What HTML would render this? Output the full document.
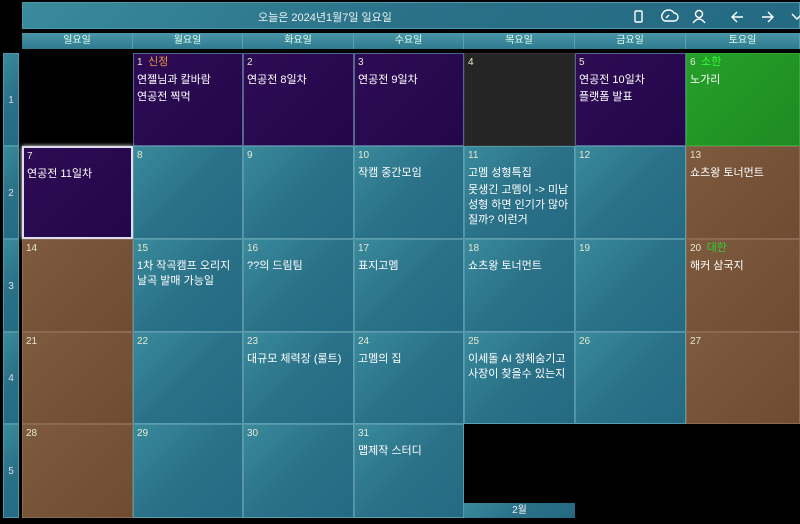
<!DOCTYPE html>
<html><head><meta charset="utf-8"><style>
*{margin:0;padding:0;box-sizing:border-box}
body{width:800px;height:524px;background:#000;position:relative;overflow:hidden;font-family:"Liberation Sans","Noto Sans CJK KR",sans-serif;color:#fff}
.a{position:absolute}
.teal{background:linear-gradient(135deg,#3a8a9c 0%,#2a7188 50%,#236a82 100%)}
.title{left:22px;top:2px;width:778px;height:27px;border:1px solid #4d98a8;font-size:11px}
.hd{top:33px;height:16px;font-size:10px;text-align:center;line-height:15px;color:#dfe;border-right:1px solid #5aa0b0;background:linear-gradient(#4a95a8,#2e7a8e)}
.wk{left:3px;width:16px;font-size:10px;text-align:center;color:#dde;border:1px solid #4d98a8}
.c{border:1px solid rgba(120,180,195,.55);padding:2px 3px;font-size:11px;line-height:17px;word-break:break-all}
.n{font-size:10px;color:#e6e8d0;line-height:13px;margin-bottom:4px}
.p{background:linear-gradient(135deg,#2e0c55,#23064a)}
.br{background:linear-gradient(135deg,#7e5a3e,#6e4c32);border-color:#8a6a50}
.g{background:linear-gradient(135deg,#26a02a,#1f8a22);border-color:#3a3}
.dk{background:#252525;border-color:#333}
.ev{font-size:11px;line-height:15px;margin-bottom:2px}
</style></head><body>
<div class="a title teal">
<div class="a" style="left:235px;top:6px;color:#e8f0f0">오늘은 2024년1월7일 일요일</div>
<svg class="a" style="left:608px;top:5px" width="170" height="18" viewBox="0 0 170 18" fill="none" stroke="#fff" stroke-width="1.4">
<rect x="4" y="3" width="7" height="11" rx="1"/>
<path d="M34 13 a5 5 0 0 1 -2 -8 a6 5 0 0 1 11 0 a4 4 0 0 1 0 8 z M35 10 l3 -3"/>
<circle cx="68" cy="6" r="3.5"/><path d="M62 15 q6 -8 12 0"/>
<path d="M112 9 h-11 M106 4 l-5 5 5 5"/>
<path d="M131 9 h11 M137 4 l5 5 -5 5"/>
<path d="M164 6 l5 5 5 -5" transform="translate(-3,0)"/>
</svg>
</div>
<div class="a hd" style="left:22px;width:111px">일요일</div>
<div class="a hd" style="left:133px;width:110px">월요일</div>
<div class="a hd" style="left:243px;width:111px">화요일</div>
<div class="a hd" style="left:354px;width:110px">수요일</div>
<div class="a hd" style="left:464px;width:111px">목요일</div>
<div class="a hd" style="left:575px;width:111px">금요일</div>
<div class="a hd" style="left:686px;width:114px">토요일</div>

<div class="a wk teal" style="top:53px;height:93px;line-height:93px">1</div>
<div class="a wk teal" style="top:146px;height:93px;line-height:93px">2</div>
<div class="a wk teal" style="top:239px;height:93px;line-height:93px">3</div>
<div class="a wk teal" style="top:332px;height:92px;line-height:92px">4</div>
<div class="a wk teal" style="top:424px;height:94px;line-height:94px">5</div>

<!-- row1 -->
<div class="a c p" style="left:133px;top:53px;width:110px;height:93px"><div class="n">1 &nbsp;<span style="color:#e89a40;font-size:11px">신정</span></div><div class="ev">연젤님과 칼바람</div><div class="ev">연공전 찍먹</div></div>
<div class="a c p" style="left:243px;top:53px;width:111px;height:93px"><div class="n">2</div><div class="ev">연공전 8일차</div></div>
<div class="a c p" style="left:354px;top:53px;width:110px;height:93px"><div class="n">3</div><div class="ev">연공전 9일차</div></div>
<div class="a c dk" style="left:464px;top:53px;width:111px;height:93px"><div class="n">4</div></div>
<div class="a c p" style="left:575px;top:53px;width:111px;height:93px"><div class="n">5</div><div class="ev">연공전 10일차</div><div class="ev">플랫폼 발표</div></div>
<div class="a c g" style="left:686px;top:53px;width:114px;height:93px"><div class="n">6 &nbsp;<span style="color:#3f3;font-size:11px">소한</span></div><div class="ev">노가리</div></div>
<!-- row2 -->
<div class="a c p" style="left:22px;top:146px;width:111px;height:93px;border:2px solid #dde;box-shadow:0 0 4px #fff"><div class="n">7</div><div class="ev">연공전 11일차</div></div>
<div class="a c teal" style="left:133px;top:146px;width:110px;height:93px"><div class="n">8</div></div>
<div class="a c teal" style="left:243px;top:146px;width:111px;height:93px"><div class="n">9</div></div>
<div class="a c teal" style="left:354px;top:146px;width:110px;height:93px"><div class="n">10</div><div class="ev">작캠 중간모임</div></div>
<div class="a c teal" style="left:464px;top:146px;width:111px;height:93px"><div class="n">11</div><div class="ev">고멤 성형특집</div><div class="ev">못생긴 고멤이 -&gt; 미남성형 하면 인기가 많아질까? 이런거</div></div>
<div class="a c teal" style="left:575px;top:146px;width:111px;height:93px"><div class="n">12</div></div>
<div class="a c br" style="left:686px;top:146px;width:114px;height:93px"><div class="n">13</div><div class="ev">쇼츠왕 토너먼트</div></div>
<!-- row3 -->
<div class="a c br" style="left:22px;top:239px;width:111px;height:93px"><div class="n">14</div></div>
<div class="a c teal" style="left:133px;top:239px;width:110px;height:93px"><div class="n">15</div><div class="ev">1차 작곡캠프 오리지날곡 발매 가능일</div></div>
<div class="a c teal" style="left:243px;top:239px;width:111px;height:93px"><div class="n">16</div><div class="ev">??의 드림팀</div></div>
<div class="a c teal" style="left:354px;top:239px;width:110px;height:93px"><div class="n">17</div><div class="ev">표지고멤</div></div>
<div class="a c teal" style="left:464px;top:239px;width:111px;height:93px"><div class="n">18</div><div class="ev">쇼츠왕 토너먼트</div></div>
<div class="a c teal" style="left:575px;top:239px;width:111px;height:93px"><div class="n">19</div></div>
<div class="a c br" style="left:686px;top:239px;width:114px;height:93px"><div class="n">20 &nbsp;<span style="color:#3c3;font-size:11px">대한</span></div><div class="ev">해커 삼국지</div></div>
<!-- row4 -->
<div class="a c br" style="left:22px;top:332px;width:111px;height:92px"><div class="n">21</div></div>
<div class="a c teal" style="left:133px;top:332px;width:110px;height:92px"><div class="n">22</div></div>
<div class="a c teal" style="left:243px;top:332px;width:111px;height:92px"><div class="n">23</div><div class="ev">대규모 체력장 (룰트)</div></div>
<div class="a c teal" style="left:354px;top:332px;width:110px;height:92px"><div class="n">24</div><div class="ev">고멤의 집</div></div>
<div class="a c teal" style="left:464px;top:332px;width:111px;height:92px"><div class="n">25</div><div class="ev">이세돌 AI 정체숨기고 사장이 찾을수 있는지</div></div>
<div class="a c teal" style="left:575px;top:332px;width:111px;height:92px"><div class="n">26</div></div>
<div class="a c br" style="left:686px;top:332px;width:114px;height:92px"><div class="n">27</div></div>
<!-- row5 -->
<div class="a c br" style="left:22px;top:424px;width:111px;height:94px"><div class="n">28</div></div>
<div class="a c teal" style="left:133px;top:424px;width:110px;height:94px"><div class="n">29</div></div>
<div class="a c teal" style="left:243px;top:424px;width:111px;height:94px"><div class="n">30</div></div>
<div class="a c teal" style="left:354px;top:424px;width:110px;height:94px"><div class="n">31</div><div class="ev">맵제작 스터디</div></div>
<div class="a teal" style="left:464px;top:503px;width:111px;height:15px;font-size:10px;text-align:center;line-height:15px;color:#eee">2월</div>
</body></html>
